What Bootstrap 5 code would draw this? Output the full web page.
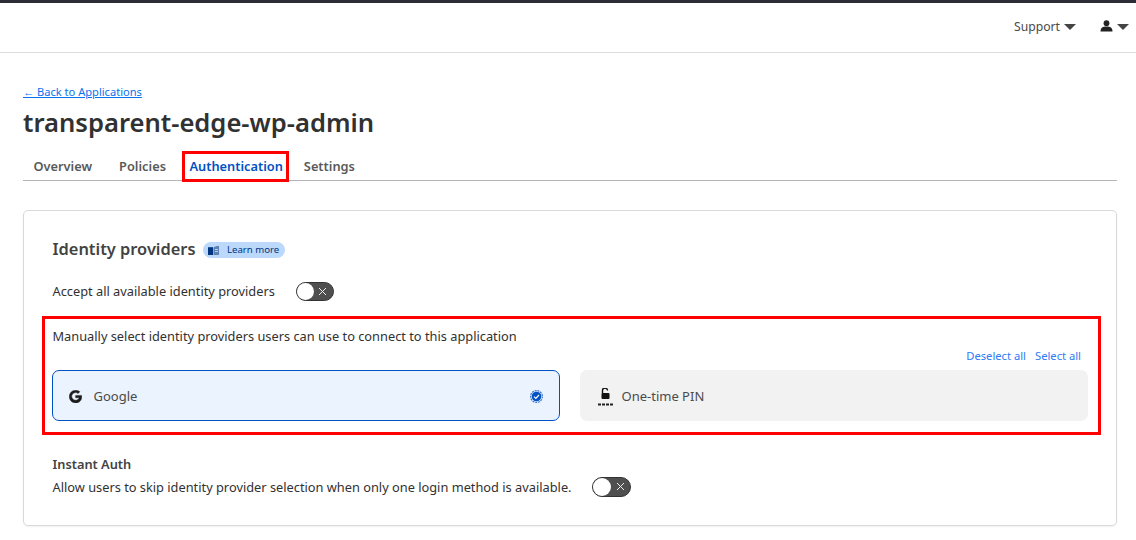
<!DOCTYPE html>
<html lang="en"><head><meta charset="utf-8"><title>transparent-edge-wp-admin</title>
<link href="https://cdn.jsdelivr.net/npm/bootstrap@5.3.0/dist/css/bootstrap.min.css" rel="stylesheet">
<style>
html,body{height:540px;overflow:hidden}
body{font-family:"Noto Sans",sans-serif;color:#313131;font-size:12.8px;background:#fff}
.topstrip{height:3px;background:#2c2c36}
.hdr{height:50px;border-bottom:1px solid #dcdcdc;padding-right:7px;font-size:12.2px;color:#4a4a4a}
.caret{display:inline-block;border-left:6px solid transparent;border-right:6px solid transparent;border-top:6.500px solid #444;margin-bottom:2px}
.persongap{margin-left:24px;margin-bottom:4px}
.pagewrap{padding:31px 19px 0 23px}
.backlink{font-size:11.100px;line-height:15px;color:#0a72ef;display:block;height:15px}
.apptitle{font-size:25.600px;font-weight:600;line-height:34px;margin:7px 0 0;color:#313131}
.tabrow{margin-top:12px;height:29px;border-bottom:1px solid #b5b5b5;font-size:12.800px;font-weight:600;color:#595959;padding-left:10.500px}
.tabitem{line-height:28px;margin-right:27px}
.tabon{color:#0051c3;position:relative;margin-left:-3.500px;margin-right:21px}
.tabon::after{content:"";position:absolute;left:-7px;right:-6.500px;top:-1px;bottom:-2px;border:3px solid #f00}
.mainbox{margin-top:29px;height:316px;border:1px solid #d9d9d9;border-radius:5px;padding:27px 28px 0 28.500px;box-shadow:0 1px 2px rgba(0,0,0,.06)}
.sect{font-size:16.400px;font-weight:600;line-height:22px;color:#424242}
.pill{background:#bcd9fb;color:#003681;border-radius:9px;font-size:9.600px;height:16px;padding:0 5.500px;margin-left:7px;margin-top:2px}
.acceptrow{margin-top:20px;height:22px;line-height:22px}
.tog{width:38px;height:19px;background:#4f4f4f;border-radius:10px;border:1px solid #333;position:relative;margin-left:21px;flex:none}
.tog::before{content:"";position:absolute;left:0;top:0;width:17px;height:17px;background:#fff;border-radius:50%}
.tog svg{position:absolute;right:5.500px;top:4px}
.redbox{margin:14px -13px 0 -10.500px;height:119px;border:3px solid #f00;padding:7px 10px 0 7.500px}
.manual{line-height:20px;color:#313131}
.linkrow{font-size:11.200px;line-height:14px;margin-top:3px;padding-right:7px;color:#2f7bf5}
.linkrow span+span{margin-left:9px}
.provgrid{display:grid;grid-template-columns:508px 508px;column-gap:20px;margin:7px 0 0 -1px}
.prov{height:51px;border-radius:7px;font-size:13px;color:#4a4a4a;padding-top:2px}
.provon{background:#ebf3fe;border:1px solid #0051c3;padding-left:16px;padding-right:16px}
.provoff{background:#f2f2f2;padding-left:17px;padding-right:16px}
.instant{margin-top:20px;font-weight:600;line-height:18px;color:#424242}
.instrow{margin-top:2px;line-height:24px;color:#313131}
.instrow .tog{margin-left:20.500px;width:39px;height:20px}
.instrow .tog::before{width:18px;height:18px}
</style></head>
<body>
<div class="topstrip"></div>
<header class="hdr d-flex justify-content-end align-items-center">
  <span>Support</span><span class="caret ms-1"></span>
  <svg class="persongap" width="13" height="12" viewBox="0 0 13 12"><circle cx="6.500" cy="3.200" r="2.900" fill="#222"/><path d="M.5 11.500c0-3.600 2.300-4.900 6-4.900s6 1.300 6 4.900z" fill="#222"/></svg>
  <span class="caret ms-1"></span>
</header>
<main class="pagewrap">
  <a class="backlink" href="#">← Back to Applications</a>
  <h1 class="apptitle">transparent-edge-wp-admin</h1>
  <nav class="tabrow d-flex">
    <span class="tabitem">Overview</span>
    <span class="tabitem">Policies</span>
    <span class="tabitem tabon">Authentication</span>
    <span class="tabitem">Settings</span>
  </nav>
  <section class="mainbox">
    <div class="d-flex align-items-center">
      <span class="sect">Identity providers</span>
      <span class="pill d-inline-flex align-items-center gap-1">
        <svg class="me-1" width="11" height="9" viewBox="0 0 11 9"><path d="M0 1.200h5.200V9H0z" fill="#003681"/><path d="M5.800 1.200L9 0h2v9H5.800z" fill="#5c7fb5"/><path d="M7 3.500h3M7 5.500h3" stroke="#d5e4fa" stroke-width=".8"/></svg>
        <span>Learn more</span>
      </span>
    </div>
    <div class="acceptrow d-flex align-items-center">
      <span>Accept all available identity providers</span>
      <span class="tog"><svg width="9" height="9" viewBox="0 0 9 9"><path d="M1 1l7 7M8 1l-7 7" stroke="#eee" stroke-width="1"/></svg></span>
    </div>
    <div class="redbox">
      <div class="manual">Manually select identity providers users can use to connect to this application</div>
      <div class="linkrow d-flex justify-content-end"><span>Deselect all</span><span>Select all</span></div>
      <div class="provgrid">
        <div class="prov provon d-flex align-items-center">
          <svg width="13" height="13" viewBox="0 0 13 13"><path d="M6.600 5.400v2.400h3.500c-.4 1.600-1.700 2.400-3.500 2.400a3.800 3.800 0 1 1 2.500-6.600l1.800-1.800A6.400 6.400 0 1 0 6.600 13c3.700 0 6.200-2.600 6.200-6.300 0-.4 0-.9-.1-1.300z" fill="#1d1d1d" stroke="#1d1d1d" stroke-width=".4"/></svg>
          <span class="ms-2 ps-1 flex-grow-1">Google</span>
          <svg width="13" height="13" viewBox="0 0 13 13"><circle cx="6.500" cy="6.500" r="5.900" fill="none" stroke="#3f76cf" stroke-width="1.200" stroke-dasharray="2 .8"/><circle cx="6.500" cy="6.500" r="4.800" fill="#0051c3"/><path d="M4 6.700l1.800 1.800L9 5" fill="none" stroke="#fff" stroke-width="1.200"/></svg>
        </div>
        <div class="prov provoff d-flex align-items-center">
          <svg width="17" height="18" viewBox="0 0 17 18"><path d="M5.500 5V2.500a2.500 2.500 0 0 1 5 0" fill="none" stroke="#111" stroke-width="1.400"/><rect x="4.500" y="5" width="8" height="6" rx="1" fill="#111"/><path d="M1 16.500h15" stroke="#222" stroke-width="2" stroke-dasharray="3 1"/></svg>
          <span class="ms-2">One-time PIN</span>
        </div>
      </div>
    </div>
    <div class="instant">Instant Auth</div>
    <div class="instrow d-flex align-items-center">
      <span>Allow users to skip identity provider selection when only one login method is available.</span>
      <span class="tog"><svg width="9" height="9" viewBox="0 0 9 9"><path d="M1 1l7 7M8 1l-7 7" stroke="#eee" stroke-width="1"/></svg></span>
    </div>
  </section>
</main>
</body></html>
